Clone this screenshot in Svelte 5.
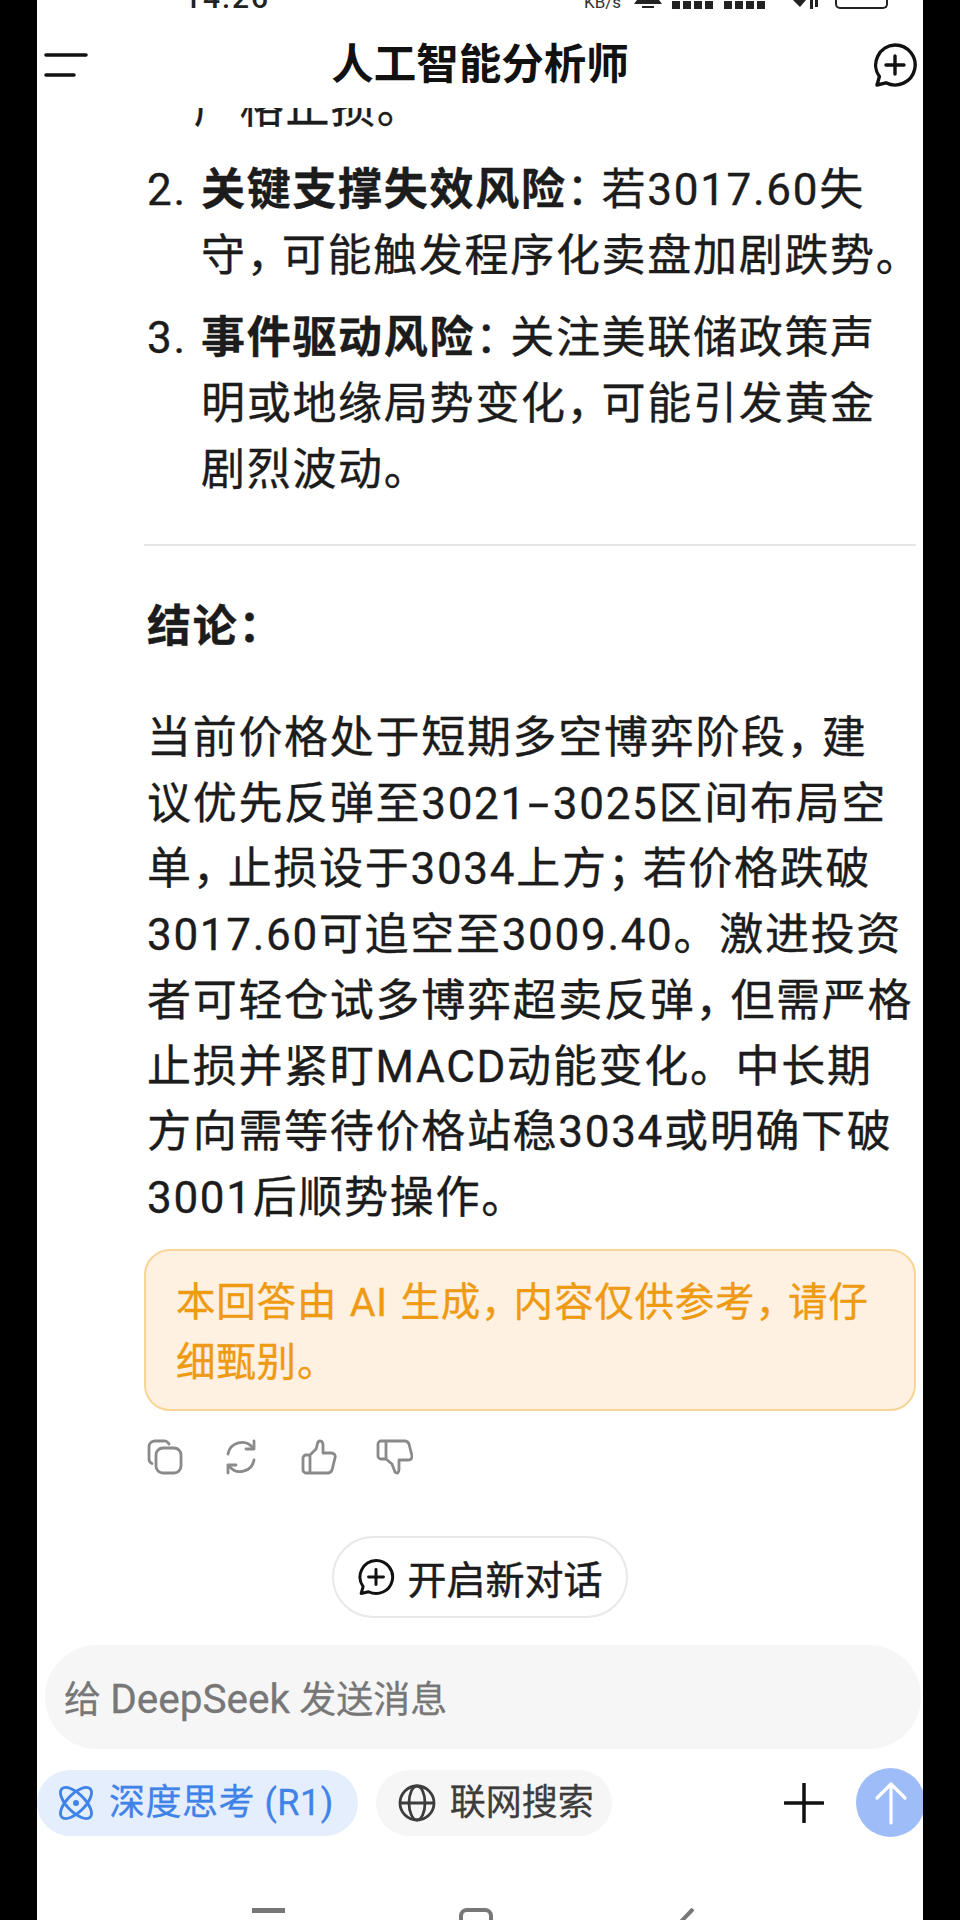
<script>
  const actions = ['copy', 'regen', 'up', 'down'];
</script>

<div class="phone">
  <div class="status">
    <span class="time">14:26</span>
    <div class="status-right">
      <span class="kbs">KB/s</span>
      <svg class="s-bell" width="30" height="9" viewBox="0 0 30 9"><path d="M4 0h22l3 4H1zM9 6h12v2H9z" fill="#222"/></svg>
      <span class="bars"></span>
      <span class="bars"></span>
      <svg class="s-wifi" width="28" height="9" viewBox="0 0 28 9"><path d="M1 0h13l-6 7zM18 0h3v9h-3zM23 0h3v7h-3z" fill="#222"/></svg>
      <span class="battery"></span>
    </div>
  </div>

  <header class="header">
    <svg class="menu" width="44" height="26" viewBox="0 0 44 26"><path d="M2 3h40M2 23h28" stroke="#111" stroke-width="3.5" stroke-linecap="round" fill="none"/></svg>
    <h1>人工智能分析师</h1>
    <svg class="newchat" width="46" height="46" viewBox="0 0 46 46"><path d="M23 3a20 20 0 1 1-9 37.8L5 43l2.4-8.4A20 20 0 0 1 23 3z" fill="none" stroke="#111" stroke-width="3.4" stroke-linejoin="round"/><path d="M23 14v18M14 23h18" stroke="#111" stroke-width="3.4" stroke-linecap="round"/></svg>
  </header>

  <main class="scroll">
    <div class="inner">
      <ol class="list">
        <li class="clipped"><span class="num"></span><span class="body">严格止损。</span></li>
        <li><span class="num">2.</span><span class="body"><b>关键支撑失效风险</b><i class="p">：</i>若3017.60失<br />守<i class="p">，</i>可能触发程序化卖盘加剧跌势。</span></li>
        <li><span class="num">3.</span><span class="body"><b>事件驱动风险</b><i class="p">：</i>关注美联储政策声<br />明或地缘局势变化<i class="p">，</i>可能引发黄金<br />剧烈波动。</span></li>
      </ol>
      <hr />
      <h2>结论<i class="p">：</i></h2>
      <p class="para">当前价格处于短期多空博弈阶段<i class="p">，</i>建<br />议优先反弹至3021<i class="dash">-</i>3025区间布局空<br />单<i class="p">，</i>止损设于3034上方<i class="p">；</i>若价格跌破<br />3017.60可追空至3009.40。激进投资<br />者可轻仓试多博弈超卖反弹<i class="p">，</i>但需严格<br />止损并紧盯MACD动能变化。中长期<br />方向需等待价格站稳3034或明确下破<br />3001后顺势操作。</p>
      <div class="notice">本回答由 AI 生成<i class="p">，</i>内容仅供参考<i class="p">，</i>请仔<br />细甄别。</div>
      <div class="actions">
        {#each actions as a}
          <svg width="40" height="40" viewBox="0 0 40 40" fill="none" stroke="#8a8a8a" stroke-width="2.8" stroke-linecap="round" stroke-linejoin="round">
            {#if a === 'copy'}
              <path d="M7 26.5A5 5 0 0 1 4 22V9.500A6 6 0 0 1 10 4h8a6 6 0 0 1 6 3"/>
              <rect x="11" y="11" width="25" height="25" rx="7"/>
            {:else if a === 'regen'}
              <path d="M7 17A14 14 0 0 1 32 11M33 23A14 14 0 0 1 8 29"/>
              <path d="M33 4v8h-8M7 36v-8h8"/>
            {:else if a === 'up'}
              <path d="M13 18v18H9a3 3 0 0 1-3-3V21a3 3 0 0 1 3-3h4zM13 18l6-6c1-2 1-5 2-7 2-2 5-1 5 3v8h8c3 0 5 2 4 5l-3 12c-1 2-2 3-4 3H13"/>
            {:else}
              <path d="M13 4v18H8a3 3 0 0 1-3-3V7a3 3 0 0 1 3-3h5zM13 4h19c2 0 3 1 4 3l3 12c0 2-1 4-4 4h-9v9c0 4-2 5-4 3l-3-8-6-5"/>
            {/if}
          </svg>
        {/each}
      </div>
    </div>
  </main>

  <div class="newbar">
    <button class="pill">
      <svg width="38" height="38" viewBox="0 0 46 46"><path d="M23 3a20 20 0 1 1-9 37.8L5 43l2.4-8.4A20 20 0 0 1 23 3z" fill="none" stroke="#111" stroke-width="3.6" stroke-linejoin="round"/><path d="M23 14v18M14 23h18" stroke="#111" stroke-width="3.6" stroke-linecap="round"/></svg>
      <span>开启新对话</span>
    </button>
  </div>

  <div class="input">给 <span class="latin">DeepSeek</span> 发送消息</div>

  <div class="tools">
    <div class="chip active">
      <svg width="38" height="38" viewBox="0 0 38 38" fill="none" stroke="#3f82e8" stroke-width="2.8"><ellipse cx="19" cy="19" rx="9" ry="20" transform="rotate(45 19 19)"/><ellipse cx="19" cy="19" rx="9" ry="20" transform="rotate(-45 19 19)"/><circle cx="19" cy="19" r="3" fill="#3f82e8" stroke="none"/></svg>
      <span>深度思考 (R1)</span>
    </div>
    <div class="chip plain">
      <svg width="38" height="38" viewBox="0 0 38 38" fill="none" stroke="#3d3d3d" stroke-width="2.8"><circle cx="19" cy="19" r="17"/><ellipse cx="19" cy="19" rx="8" ry="17"/><path d="M2 19h34"/></svg>
      <span>联网搜索</span>
    </div>
    <div class="spacer"></div>
    <svg class="plus" width="40" height="40" viewBox="0 0 40 40"><path d="M20 1v38M1 20h38" stroke="#111" stroke-width="3.5" stroke-linecap="round"/></svg>
    <div class="send">
      <svg width="36" height="44" viewBox="0 0 36 44" fill="none" stroke="#fff" stroke-width="3.2" stroke-linecap="round" stroke-linejoin="round"><path d="M18 42V3M4 17L18 3l14 14"/></svg>
    </div>
  </div>

  <div class="nav">
    <span class="nav-dash"></span>
    <span class="nav-home"></span>
    <svg width="22" height="14" viewBox="0 0 22 14"><path d="M20 1L2 20" stroke="#777" stroke-width="4" fill="none"/></svg>
  </div>
</div>

<style>
  :global(body) { margin: 0; background: #000; }
  .phone {
    width: 886px;
    height: 1920px;
    margin: 0 37px;
    background: #fff;
    display: flex;
    flex-direction: column;
    overflow: hidden;
    color: #1c1c1c;
    font-family: Roboto, "Noto Sans CJK SC", sans-serif;
  }
  .status {
    height: 9px;
    flex: none;
    display: flex;
    justify-content: space-between;
    align-items: flex-end;
    padding: 0 35px 0 147px;
    overflow: hidden;
  }
  .time { font-size: 30px; line-height: 24px; height: 24px; flex: none; font-weight: 500; color: #222; margin-bottom: -1px; letter-spacing: 2px; }
  .status-right { display: flex; align-items: flex-end; }
  .kbs { width: 37px; font-size: 17px; line-height: 14px; height: 14px; flex: none; color: #333; margin-bottom: 0; }
  .s-bell { margin-left: 12px; flex: none; }
  .bars { width: 43px; height: 8px; margin-left: 9px; flex: none; background: repeating-linear-gradient(90deg, #222 0 8px, transparent 8px 11px); }
  .s-wifi { margin-left: 25px; flex: none; }
  .battery { width: 49px; height: 8px; flex: none; border: 2px solid #222; border-top: 0; border-radius: 0 0 5px 5px; margin-left: 15px; }
  .header {
    height: 99px;
    flex: none;
    position: relative;
    z-index: 2;
    background: #fff;
    display: flex;
    align-items: center;
    justify-content: space-between;
    padding: 13px 5px 0 7px;
    box-sizing: border-box;
  }
  h1 { margin: 0; font-size: 42.5px; font-weight: 700; line-height: 60px; color: #111; }
  .scroll { flex: 1; min-height: 0; overflow: hidden; padding: 0 7px 0 107px; }
  .inner { margin-top: -33px; font-size: 44px; line-height: 66px; letter-spacing: 1.7px; white-space: nowrap; -webkit-text-stroke: 0.35px currentColor; }
  .list { list-style: none; margin: 0; padding: 0 0 0 3px; display: flex; flex-direction: column; gap: 16px; }
  .list li { display: flex; }
  .clipped .body { margin-left: -7px; }
  .num { width: 54px; flex: none; }
  b { font-weight: 700; }
  .p { font-style: normal; letter-spacing: -9px; }
  .dash { font-style: normal; display: inline-block; transform: scaleX(1.7); margin: 0 6px; }
  hr { margin: 41px 0 0; border: 0; height: 2px; background: #e6e6e6; }
  h2 { margin: 48px 0 0 3px; font-size: 44px; line-height: 66px; font-weight: 700; }
  .para { margin: 46px 0 0 3px; line-height: 65.7px; }
  .notice {
    margin-top: 17px;
    height: 162px;
    box-sizing: border-box;
    padding: 22px 30px 0;
    background: #fef1e2;
    border: 2px solid #f7d596;
    border-radius: 26px;
    color: #ee9a12;
    font-size: 39.5px;
    line-height: 60px;
    letter-spacing: 0.8px;
    word-spacing: 2px;
  }
  .notice .p { letter-spacing: -7px; }
  .actions { display: flex; gap: 36px; margin: 26px 0 0 0; padding-left: 1px; }
  .newbar { flex: none; display: flex; justify-content: center; padding-bottom: 27px; }
  .pill {
    height: 82px;
    width: 296px;
    box-sizing: border-box;
    border: 2px solid #e8e8e8;
    border-radius: 41px;
    background: #fff;
    display: flex;
    align-items: center;
    justify-content: center;
    gap: 12px;
    padding: 0;
    font: inherit;
    font-size: 39px;
    color: #1c1c1c;
    -webkit-text-stroke: 0.5px currentColor;
  }
  .input {
    flex: none;
    height: 104px;
    margin: 0 2px 0 8px;
    border-radius: 52px;
    background: #f6f6f6;
    color: #777;
    font-size: 37px;
    line-height: 108px;
    padding-left: 19px;
    -webkit-text-stroke: 0.3px currentColor;
  }
  .latin { font-size: 40.5px; }
  .tools { flex: none; display: flex; align-items: center; height: 69px; margin-top: 19px; }
  .chip { height: 66px; border-radius: 33px; background: #f6f6f6; display: flex; align-items: center; gap: 14px; padding: 0 24px 0 20px; font-size: 36px; letter-spacing: 0.5px; color: #3d3d3d; margin-right: 18px; -webkit-text-stroke: 0.3px currentColor; }
  .chip.active { background: #e4eefc; color: #3f82e8; }
  .chip.plain { padding: 0 18px 0 22px; letter-spacing: 0; }
  .chip span { line-height: 66px; }
  .spacer { flex: 1; }
  .plus { margin-right: 32px; }
  .send { width: 69px; height: 69px; margin-right: -2px; border-radius: 50%; background: #9dbcf8; display: flex; align-items: center; justify-content: center; flex: none; }
  .nav { flex: none; height: 83px; display: flex; align-items: flex-start; padding: 71px 0 0 215px; box-sizing: border-box; overflow: hidden; }
  .nav-dash { width: 33px; height: 5px; background: #777; flex: none; }
  .nav-home { width: 34px; height: 24px; border: 4px solid #777; border-radius: 8px; box-sizing: border-box; margin-left: 174px; flex: none; }
  .nav svg { margin-left: 180px; flex: none; }
</style>
